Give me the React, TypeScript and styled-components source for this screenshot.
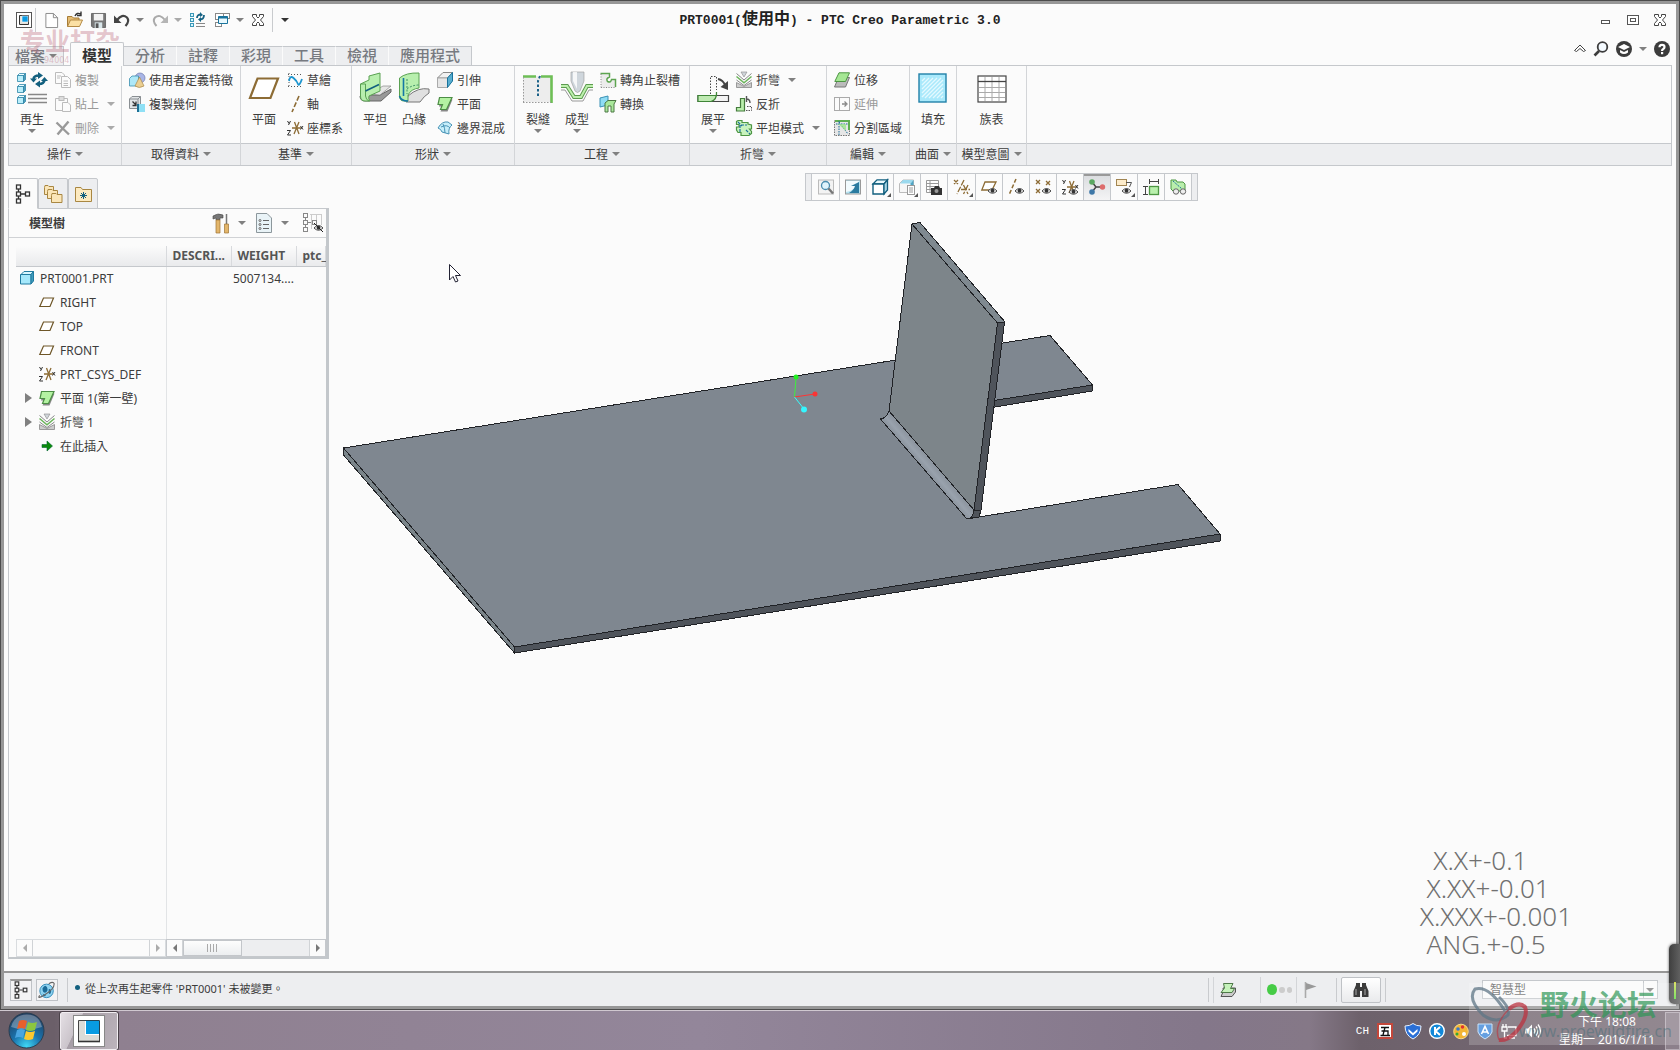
import React from 'react';
import styled, { createGlobalStyle, css } from 'styled-components';

const GlobalStyle = createGlobalStyle`
  * { box-sizing: border-box; }
  html, body { margin: 0; height: 100%; overflow: hidden; }
  body {
    font-family: "Noto Sans", "Noto Sans CJK TC", sans-serif;
    font-size: 12px;
    color: #3c3c3c;
    background: #fbfbfb;
  }
  button, select { font: inherit; color: inherit; }
  button { padding: 0; border: 0; background: none; }
  svg { display: block; flex: none; }
`;

/* ---------- icons ---------- */

const Eye = ({ x, y }: { x: number; y: number }) => (
  <g transform={`translate(${x} ${y})`}>
    <path d="M0 3Q4.500 -2 9 3Q4.500 7.500 0 3Z" fill="#fff" stroke="#444" />
    <circle cx="4.500" cy="2.800" r="2" fill="#333" />
  </g>
);

const Cube = ({ x, y }: { x: number; y: number }) => (
  <g transform={`translate(${x} ${y})`} stroke="#2f86a8" strokeWidth=".8">
    <path d="M.5 2.500L2.500 .5H8.500L6.500 2.500Z" fill="#e9fbff" />
    <path d="M.5 2.500H6.500V8.500H.5Z" fill="#b9eefb" />
    <path d="M6.500 2.500L8.500 .5V6.500L6.500 8.500Z" fill="#4e9dbb" />
  </g>
);

const Axes = () => (
  <g fill="none">
    <path d="M5 8H14M7.500 2L12 14M12 2L7 14" stroke="#8d6c35" strokeWidth="1.300" />
    <path d="M.5 1L2 3.500M3.500 1L1.500 5M0 10.500H3.500L.5 15H4M13.500 6L16 9.500M16 6L13.500 9.500" stroke="#333" />
  </g>
);

type IconDef = [number, React.ReactNode];

const ICONS: Record<string, IconDef> = {
  app: [16, <><rect x=".5" y=".5" width="15" height="15" fill="#fff" stroke="#555" /><path d="M3.500 3.500H12.500V12.500H3.500Z" fill="#e2e2dc" stroke="#333" /><rect x="6" y="4" width="6" height="6" fill="#0a9be3" stroke="#fff" strokeWidth=".6" /></>],
  newFile: [16, <path d="M2 .5H10L14.500 5V15.500H2ZM10 .5V5H14.500" fill="#fff" stroke="#888" />],
  open: [16, <><path d="M.5 14.500V4.500H5L6.500 6H12V8" fill="#e5bd74" stroke="#a67b35" /><path d="M.5 14.500L3.500 8H15.500L12.500 14.500Z" fill="#fbe0a4" stroke="#b48a45" /><path d="M8 4Q10 0 13.500 2M14 -.5V3.500H10" fill="none" stroke="#333" strokeWidth="1.400" /></>],
  save: [16, <><path d="M.5 .5H15.500V15.500H2L.5 14Z" fill="#777" stroke="#666" /><rect x="3" y="1" width="10" height="7" fill="#f2f2f2" /><rect x="4" y="10" width="8" height="6" fill="#d9e6ea" /><rect x="5" y="11" width="3" height="5" fill="#555" /></>],
  undo: [16, <><path d="M3 8Q8 1.500 13 5.500Q16 9 11.500 14" fill="none" stroke="#444" strokeWidth="2.200" /><path d="M0 3.500V11H7.500Z" fill="#444" /></>],
  redo: [16, <><path d="M13 8Q8 1.500 3 5.500Q0 9 4.500 14" fill="none" stroke="#aaa" strokeWidth="2" /><path d="M16 3.500V11H8.500Z" fill="#b5b5b5" /></>],
  regenSmall: [16, <><g fill="#d5f5fd" stroke="#3b98b8"><rect x=".5" y="1.500" width="3" height="3" /><rect x=".5" y="6.500" width="3" height="3" /><rect x=".5" y="11.500" width="3" height="3" /></g><path d="M6 11.500H15M6 14.500H15" stroke="#888" /><path d="M7 6Q7 2.500 11 2.500M14 3Q14 7.500 10 7.500" fill="none" stroke="#176384" strokeWidth="1.800" /><path d="M10 0L13 3L10 5ZM11 5L8 7.500L11 10Z" fill="#176384" /></>],
  windows: [16, <g fill="#fff" stroke="#888"><rect x="1.500" y="1.500" width="8" height="6" /><rect x="1.500" y="10.500" width="6" height="4" /><rect x="9.500" y="1.500" width="6" height="5" /><path d="M4.500 4.500H13.500V11.500H4.500Z" fill="#e8f8fd" stroke="#19739c" /><path d="M4.500 5.500H13.500" stroke="#19739c" strokeWidth="2" /></g>],
  closeOutline: [12, <path d="M.5 .5H4.500V2.500L6 4L7.500 2.500V.5H11.500V2.500L8.500 6L11.500 9.500V11.500H7.500V9.500L6 8L4.500 9.500V11.500H.5V9.500L3.500 6L.5 2.500Z" fill="#fff" stroke="#444" />],
  minimize: [12, <rect x="1.500" y="6.500" width="8" height="3" fill="#fff" stroke="#555" />],
  maximize: [12, <g fill="#fff" stroke="#555"><rect x=".5" y="1.500" width="11" height="9" /><rect x="3.500" y="4.500" width="5" height="3" /></g>],
  collapse: [12, <path d="M.5 7.500L6 2L11.500 7.500L9.500 8.500L6 5.500L2.500 8.500Z" fill="#fff" stroke="#444" />],
  search: [16, <><circle cx="9.500" cy="6" r="4.800" fill="#f4faff" stroke="#3c3c3c" strokeWidth="1.800" /><path d="M6 10L1.500 14.500" stroke="#3c3c3c" strokeWidth="2.600" /></>],
  learn: [16, <><circle cx="8" cy="8" r="8" fill="#3c3c3c" /><path d="M8 3L14 6L8 9L2 6ZM4 9V11.500Q8 14.500 12 11.500V9L8 11Z" fill="#fff" /></>],
  help: [16, <><circle cx="8" cy="8" r="8" fill="#3c3c3c" /><path d="M5.500 6.300Q5.500 3.800 8 3.800T10.500 6Q10.500 7.200 9.200 8Q8 8.700 8 10" fill="none" stroke="#fff" strokeWidth="2.200" /><rect x="7" y="11" width="2.200" height="2.200" fill="#fff" /></>],

  regenerate: [32, <><Cube x={1} y={1} /><Cube x={1} y={12} /><Cube x={1} y={23} /><path d="M12 22.500H31M12 26.500H31M12 30.500H31" stroke="#888" strokeWidth="1.500" /><path d="M17.500 7Q18 3.500 23 3.500M28.500 8Q28 12 23 12" fill="none" stroke="#13607f" strokeWidth="2.600" /><path d="M22 0L27 3.500L22 7ZM24 8.500L19 12L24 15.500ZM14 6.500H21L17.500 10.500ZM25 9H32L28.500 5Z" fill="#13607f" /></>],
  copy: [16, <g fill="#fbfbfb" stroke="#bbb"><path d="M.5 .5H7L9.500 3V11.500H.5Z" /><path d="M6.500 4.500H12.500L15.500 7.500V15.500H6.500Z" /><path d="M2 4H6M2 6H5M8.500 9H13M8.500 11.500H13M8.500 13.500H13" /></g>],
  paste: [16, <g fill="#fbfbfb" stroke="#bbb"><path d="M.5 2.500H12.500V14.500H.5Z" /><rect x="4" y=".5" width="5" height="4" fill="#ddd" /><path d="M7.500 6.500H13L15.500 9V15.500H7.500Z" /></g>],
  remove: [16, <path d="M1.500 2.500L14 14.500M13.500 1.500L2.500 14.500" stroke="#999" strokeWidth="2.400" />],
  udf: [16, <><circle cx="11" cy="6" r="5" fill="#a9b5e6" stroke="#707cae" strokeWidth=".7" /><path d="M.5 6.500L3 4H9.500V11.500L7 14H.5Z" fill="#aee8f8" stroke="#3c8fae" strokeWidth=".8" /><path d="M10.500 5L15 14Q10 17 6 14Z" fill="#ebcf92" stroke="#a98849" strokeWidth=".7" /></>],
  copyGeom: [16, <><path d="M.5 3L3 .5H11.500V10L9 12.500H.5Z" fill="#e2e5e7" stroke="#8a8f93" /><path d="M.5 3H9V12M9 3L11.500 .5" fill="none" stroke="#8a8f93" /><path d="M3.500 5.500L7 9M7 5.500V9.500H3.500" stroke="#333" strokeWidth="1.300" fill="none" /><rect x="9" y="8" width="7" height="8" fill="#8fe0f5" /><rect x="8" y="8" width="2" height="8" fill="#1f6f94" /></>],
  plane: [32, <path d="M9.500 6.500H30L22.500 26H2Z" fill="#fff" stroke="#8d6c35" strokeWidth="2.200" />],
  sketch: [16, <><path d="M1 2.500H16M1 14.500H16M2 1V16" stroke="#555" strokeDasharray="1 2" /><path d="M2 9Q3 3 6.500 6T11 12T15 7" fill="none" stroke="#1c95cf" strokeWidth="1.800" /></>],
  axis: [16, <path d="M12 0L5 16" stroke="#8d6c35" strokeWidth="1.600" strokeDasharray="5 2" />],
  csys: [16, <Axes />],
  flat: [32, <><path d="M2 23L21 23L32 17V20L22 29H6Q1 29 1 24Z" fill="#999" stroke="#666" /><path d="M10 22L24 14H32L21 23Z" fill="#e6e6e6" stroke="#777" strokeWidth=".6" /><path d="M1.500 12L10 8V4L21 1V19L10 24Q9 27 11 29H6Q1.500 29 1.500 24Z" fill="#b8efae" stroke="#5aa152" /><path d="M1.500 12H6.500V24Q7 28 10 29" fill="none" stroke="#5aa152" /><path d="M6.500 19L20 12.500" stroke="#13607f" strokeWidth="1.600" /></>],
  flange: [32, <><path d="M10 24Q20 15 31 17V21Q26 24 22 30H8Z" fill="#e0e0e0" stroke="#777" /><path d="M1.500 6Q8 .5 21 1V16Q13 17 10 23V29H6Q1.500 29 1.500 24Z" fill="#b8efae" stroke="#5aa152" /><path d="M5.500 6V24M1.500 24Q3 29 10 29" fill="none" stroke="#1477a5" strokeWidth="1.600" /><path d="M9 17Q14 13 21 13M9 7V22" fill="none" stroke="#3a8f66" strokeDasharray="2 1.500" /></>],
  extrude: [16, <><path d="M.5 6L6 .5H15.500L10.500 6Z" fill="#f1f1f1" stroke="#888" /><path d="M.5 6H10.500V15.500H.5Z" fill="#e6e6e6" stroke="#aaa" /><path d="M10.500 6L15.500 .5V9L10.500 15.500Z" fill="#58aed0" stroke="#19739c" /></>],
  planar: [16, <><path d="M3.500 3.500H15.500L10.500 15.500H3.500L6 10.500H2Z" fill="#888" /><path d="M2.500 1.500H15L9.500 13.500H3.500L5.500 8.500H1Z" fill="#b4f2a2" stroke="#4c8d45" strokeWidth="1.200" /></>],
  blend: [16, <><path d="M1 8Q5 1 11 2L15 5Q11 8 12 14L5 12Q4 9 1 8Z" fill="#c6eefa" stroke="#4692b5" /><path d="M6 4Q8 8 8 13M4 7Q10 4 13 8" fill="none" stroke="#4692b5" /></>],
  rip: [32, <><rect x="1" y="4" width="28" height="26" fill="#ededed" /><path d="M1 4.500H14M19 4.500H29.500V31" fill="none" stroke="#6ebf56" strokeWidth="2.600" /><path d="M1.500 5V31M1 30.500H29" stroke="#999" strokeDasharray="1.500 1.500" /><path d="M18 4L16 9V24" fill="none" stroke="#1b6188" strokeWidth="2" strokeDasharray="2.500 2" /></>],
  form: [32, <><path d="M10 0H23V9L19 19Q16.500 22 14 19L10 9Z" fill="#cfd6dc" stroke="#999" strokeWidth=".6" /><path d="M12 0H16V17L12 9Z" fill="#fff" opacity=".8" /><path d="M0 14H6L13 25H20L26 14H32" fill="none" stroke="#5d9a50" strokeWidth="4" /><path d="M0 14H6L13 25H20L26 14H32" fill="none" stroke="#bdf0ad" strokeWidth="2" /><path d="M0 18H4L11 29H22L28 18H32" fill="none" stroke="#999" /></>],
  relief: [16, <><path d="M1 1H10V5Q6 7 7 10Q11 12 12 7H16V16H1Z" fill="#ececec" /><path d="M.5 1.500H9.500V5Q5.500 6.500 7.500 9.500Q11 11 11.500 7.500H15.500V15" fill="none" stroke="#5da450" strokeWidth="1.500" /><path d="M1 2V16M1 15.500H15" stroke="#888" strokeDasharray="1 1.500" /></>],
  convert: [16, <><path d="M0 2L8 0V9L0 11Z" fill="#8fdcf5" stroke="#3a91b4" /><path d="M5 7L8 4.500H16L14 8V16H11V10H8V16H5Z" fill="#a9e79b" stroke="#4c7845" /></>],
  unbend: [32, <><path d="M13.500 22V4.500H19.500V18" fill="none" stroke="#444" strokeDasharray="1.500 1.500" /><path d="M1 23.500H31.500V29.500H1Z" fill="#f3f3f3" stroke="#444" strokeWidth="1.200" /><path d="M1 23.500H19.500V20Q20 28 14 29.500H1Z" fill="#bfeab2" stroke="#3f8537" strokeWidth="1.200" /><path d="M21 7Q26 8 28 13" fill="none" stroke="#444" strokeWidth="2" /><path d="M23.500 15L31 18V9Z" fill="#444" /></>],
  bend: [16, <><path d="M5 0H11L8 5Z" fill="#d0d5da" stroke="#888" strokeWidth=".6" /><path d="M.5 1.500L8 8L15.500 1.500M.5 8L8 13.500L15.500 8" fill="none" stroke="#888" /><path d="M.5 4.500L8 10.800L15.500 4.500" fill="none" stroke="#6bb45b" strokeWidth="1.500" /><path d="M.5 10.500L8 14.500L15.500 10.500V15.500H.5Z" fill="#ccc" stroke="#888" strokeWidth=".8" /></>],
  bendBack: [16, <><path d="M.5 11.500H4.500V2.500H8.500V15H.5Z" fill="#b9eeac" stroke="#457b3d" strokeWidth="1.200" /><path d="M10 14.500H15.500V10.500H10" fill="none" stroke="#555" strokeDasharray="1.500 1" /><path d="M10.500 3Q14 3 14 7M10.500 0V6" fill="none" stroke="#555" strokeWidth="1.400" /></>],
  flatPattern: [16, <><path d="M.5 1.500L2 .5H6V2.500H12V4L15.500 5V9H13.500L15.500 11.500V13.500L13 15.500H5V12.500H2L.5 10V7H3V4.500H.5Z" fill="#c8f2bd" stroke="#4d9643" strokeWidth="1.200" /><path d="M2 2L6 6M10 10L14 14M4 12V5H11" fill="none" stroke="#1d719c" strokeWidth="1.200" strokeDasharray="3 1" /></>],
  offset: [16, <><path d="M4.500 5.500H15.500L11.500 15H.5Z" fill="#bbb" stroke="#777" /><path d="M5 .8H15.500L11.500 9.500H.8Z" fill="#a5e794" stroke="#4d9643" /></>],
  extend: [16, <g fill="none" stroke="#aaa"><rect x=".5" y="1.500" width="15" height="13" /><path d="M5.500 2V14" /><path d="M8 8H12M10.500 5.500L13 8L10.500 10.500" stroke="#888" strokeWidth="1.300" /></g>],
  split: [16, <><rect x=".5" y=".5" width="15" height="15" fill="#e6e6e6" stroke="#777" strokeDasharray="1.500 1" /><path d="M1 1H15V10" fill="none" stroke="#5fae50" strokeWidth="2" /><path d="M2 4H14M5 2L14 14M5 1V15" stroke="#1c6c97" strokeDasharray="1.500 1" /><path d="M4 4H12V11Z" fill="#9ee38b" opacity=".8" /></>],
  fill: [32, <><rect x="2" y="2" width="27" height="28" fill="#a9e9fb" stroke="#2180a8" strokeWidth="1.400" /><path d="M5 9L8 6M5 13L12 6M5 17L16 6M5 21L20 6M5 25L24 6M8 26L26 8M12 26L26 12M16 26L26 16M20 26L26 20M24 26L26 24" stroke="#e4f9fe" strokeWidth="1.300" /></>],
  family: [32, <g fill="#fff"><rect x="2" y="4" width="28" height="26" stroke="#444" strokeWidth="1.200" /><path d="M3 15.500H29M3 20.500H29M3 25.500H29M9 5V29M16 5V29M23 5V29" stroke="#aaa" /><path d="M2 9.500H30" stroke="#444" strokeWidth="1.300" /></g>],

  zoomFit: [16, <><rect x=".5" y="1" width="15" height="14" fill="#f3f3f3" stroke="#bbb" /><circle cx="7.500" cy="6.500" r="4" fill="#dff4fd" stroke="#4a8cae" strokeWidth="1.300" /><path d="M10.500 9.500L15 14.500" stroke="#777" strokeWidth="2.400" /></>],
  repaint: [16, <><rect x=".5" y="1" width="15" height="14" fill="#b5e2f0" stroke="#999" /><path d="M1 2H14Q10 12 1 13Z" fill="#f2fbfe" /><path d="M4 14Q9 11 10 7H6L14 3V14Z" fill="#2a7ba0" /></>],
  shaded: [16, <><path d="M1 5L5 .8H15.500L12 5Z" fill="#e9f9fd" stroke="#13607f" strokeWidth="1.300" /><path d="M1 5H12V15H1Z" fill="#fff" stroke="#13607f" strokeWidth="1.400" /><path d="M12 5L15.500 .8V11L12 15Z" fill="#a9d6e5" stroke="#13607f" strokeWidth="1.300" /></>],
  saved: [16, <><path d="M.5 4.500L4 1H14.500V11L11 13.500H.5Z" fill="#f6f6f6" stroke="#bbb" /><path d="M4 1H14.500L11.500 4.500H1Z" fill="#9bd9ee" /><path d="M11.500 4.500L14.500 1V6H11.500Z" fill="#4fa6c6" /><rect x="8.500" y="6.500" width="7" height="9" fill="#fff" stroke="#999" /><path d="M10 9H14M10 11H14M10 13H14" stroke="#999" /></>],
  viewMgr: [16, <><path d="M.5 1.500H12.500V13.500H.5ZM.5 4.500H12.500M.5 7.500H12.500M.5 10.500H12.500M4 2V13" fill="#fff" stroke="#999" /><path d="M5 9H8L9 7H13L14 9H16V16H5Z" fill="#333" /><circle cx="10.500" cy="12" r="2" fill="#999" /></>],
  datums: [16, <path d="M0 1L4 5M4 1L0 5M10 1L3 15M7 10.500H16M9.500 6L14 15M14 6L9.500 15" stroke="#8d6c35" strokeWidth="1.300" strokeDasharray="6 1.500" />],
  planeEye: [16, <><path d="M4 3H15L11 11H.8Z" fill="#fff" stroke="#8d6c35" strokeWidth="1.300" /><Eye x={7} y={9} /></>],
  axisEye: [16, <><path d="M8 0L1 16" stroke="#8d6c35" strokeWidth="1.500" strokeDasharray="4 2" /><Eye x={7} y={9} /></>],
  pointEye: [16, <><path d="M1 1L5 5M5 1L1 5M11 2L15 6M15 2L11 6M1 10L5 14M5 10L1 14" stroke="#8d6c35" strokeWidth="1.300" /><Eye x={7} y={9} /></>],
  csysEye: [16, <><Axes /><Eye x={7} y={10} /></>],
  spin: [16, <><path d="M3 3L7 8L3 13M7 8H13" fill="none" stroke="#444" strokeWidth="1.500" /><circle cx="3" cy="3" r="2.800" fill="#5aa861" /><circle cx="3" cy="13" r="2.800" fill="#3f78a8" /><circle cx="13.500" cy="8" r="2.700" fill="#dd6c6c" /></>],
  annotEye: [16, <><rect x=".5" y=".5" width="10" height="6" fill="#fdeccb" stroke="#a18552" /><path d="M10 3.500H15.500L13.500 8" fill="none" stroke="#555" /><Eye x={6} y={9} /></>],
  dims: [16, <><rect x="6.500" y="7.500" width="9" height="8" fill="#b9f0ac" stroke="#4d9643" strokeWidth="1.300" /><path d="M6 2.500H16M6.500 0V5M15.500 0V5M2.500 7V16M0 7.500H5M0 15.500H5" stroke="#444" /></>],
  glasses: [16, <><path d="M1 1H6L7 3H13L15 5V12H3L1 10Z" fill="#b9eeac" stroke="#4d9643" /><path d="M3 2L12 10" stroke="#1d719c" strokeDasharray="2 1" /><circle cx="6" cy="12.500" r="2.700" fill="#eee" stroke="#666" /><circle cx="13" cy="12.500" r="2.700" fill="#eee" stroke="#666" /></>],

  treeTab: [20, <g fill="none" stroke="#333" strokeWidth="1.300"><rect x="3.500" y="1" width="4" height="4" /><rect x="3.500" y="8" width="4" height="4" /><rect x="3.500" y="15" width="4" height="4" /><rect x="12.500" y="8" width="4" height="4" /><path d="M5.500 5V8M5.500 12V15M8 10H12" /></g>],
  folders: [20, <g fill="#fbe6b8" stroke="#a98742"><path d="M1.500 3.500V10.500H10.500V2.500H6L5 1.500H2Z" /><path d="M4.500 7.500V14.500H14.500V6.500H10L9 5.500H5Z" /><path d="M8.500 11.500V18.500H19V10.500H14L13 9.500H9Z" /></g>],
  favorite: [20, <><path d="M2.500 3.500H8L9.500 5.500H18.500V17.500H2.500Z" fill="#fdeac0" stroke="#a98742" /><path d="M10.500 8V15M7 11.500H14M8 9L13 14M13 9L8 14" stroke="#13607f" /></>],
  tools: [20, <><path d="M2 3Q7 -.5 12 2V5H9V7H5V5L2 6Z" fill="#777" stroke="#444" strokeWidth=".6" /><path d="M5 7H9V20H5Z" fill="#e3b66b" stroke="#9d7334" strokeWidth=".7" /><path d="M15.500 1V12" stroke="#777" strokeWidth="1.500" /><path d="M13.500 11H17.500V20H13.500Z" fill="#e3b66b" stroke="#9d7334" strokeWidth=".7" /></>],
  listDoc: [20, <><path d="M2.500 .5H13L17.500 5V19.500H2.500Z" fill="#e9f3f7" stroke="#8c979c" /><path d="M9 7.500H15M9 11.500H15M9 15.500H15" stroke="#666" /><g fill="#fff" stroke="#666"><circle cx="6" cy="7.500" r="1" /><circle cx="6" cy="11.500" r="1" /><circle cx="6" cy="15.500" r="1" /></g></>],
  treeHide: [20, <><g fill="none" stroke="#888"><rect x=".5" y=".5" width="4" height="4" /><rect x=".5" y="7.500" width="4" height="4" /><rect x=".5" y="14.500" width="4" height="4" /><rect x="9.500" y="7.500" width="4" height="4" /><path d="M2.500 5V7M2.500 12V14M5 9.500H9" /><path d="M7 1.500H19M8.500 2V16M13.500 2V7M18.500 2V12" stroke="#ccc" /></g><Eye x={11} y={12} /><path d="M11 10L20 19" stroke="#222" /></>],
  part: [16, <><path d="M2 4.500L5 1.500H14.500L12 4.500Z" fill="#d8f7ff" stroke="#217ba0" /><path d="M1.500 4.500H12V14H1.500Z" fill="#a5e8fb" stroke="#217ba0" /><path d="M12 4.500L14.500 1.500V11L12 14Z" fill="#3e9cbd" stroke="#217ba0" /></>],
  planeSmall: [16, <path d="M4.500 4H14.500L11 12.500H.8Z" fill="#fff" stroke="#6e5628" strokeWidth="1.200" />],
  insert: [16, <path d="M3 6.500H8V3L13.500 8L8 13V9.500H3Z" fill="#0a8a0a" stroke="#063" strokeWidth=".6" />],
  globe: [20, <><circle cx="9.500" cy="11" r="7.500" fill="#8fd3f0" stroke="#2a86b5" /><path d="M5 8Q8 3 10 7T8 13Q5 13 5 8ZM12 9Q16 9 14 14Q11 16 12 9ZM5 14L9 16L7 17Z" fill="#1b6b98" /><path d="M2 16Q-2 21 8 15T18 3Q17 0 12 3" fill="none" stroke="#666" strokeWidth="1.200" /></>],
  layers: [16, <><path d="M3 6H15.500V10L12 14.500H1L3.500 9Z" fill="#ccc" stroke="#555" /><path d="M3.500 1.500H13L10.500 6.500H14.500L12 10.500H1L4.500 6Z" fill="#c5f2ba" stroke="#4f7a49" /></>],
  flag: [16, <><path d="M2.500 0V16" stroke="#aaa" strokeWidth="1.600" /><path d="M3 1L13.500 4.500L3 8Z" fill="#999" /></>],
  binoculars: [16, <><path d="M3 3V1H7V15H.5V9ZM13 3V1H9V15H15.500V9Z" fill="#3b3b3b" /><rect x="6" y="5" width="4" height="4" fill="#3b3b3b" /><path d="M3 7V13M12 7V13" stroke="#aaa" /></>],
  appLarge: [32, <><rect x=".5" y=".5" width="31" height="31" fill="#fff" stroke="#888" /><path d="M5.500 5.500H26.500V26.500H5.500Z" fill="#dcdcd8" stroke="#444" /><path d="M5 26.500H27" stroke="#333" strokeWidth="1.600" /><rect x="12.500" y="5.500" width="14" height="14" fill="#089be2" stroke="#fff" /><path d="M12 5.500H26.500V20" fill="none" stroke="#245" /></>],
  ime: [16, <><rect x="1" y="1" width="14" height="14" fill="#fff" stroke="#c3473b" strokeWidth="2" /><path d="M4 4.500H12M4.500 8H11V12M8 4.500L6 12M3.500 12.500H13" stroke="#111" strokeWidth="1.300" fill="none" /></>],
  shield: [16, <><path d="M0 3Q5 3 8 .5Q11 3 16 3Q16 12 8 16Q0 12 0 3Z" fill="#2a6fd6" stroke="#e9f2ff" /><path d="M3.500 6L8 10L12.500 6V8.500L8 12.500L3.500 8.500Z" fill="#fff" /></>],
  kcircle: [16, <><circle cx="8" cy="8" r="7.300" fill="#1187d8" stroke="#fff" strokeWidth="1.400" /><path d="M6 4V12M11 4L6.500 8L11 12" fill="none" stroke="#fff" strokeWidth="2" /></>],
  palette: [16, <><circle cx="8" cy="8.500" r="7.300" fill="#f3b534" stroke="#f8d98b" /><circle cx="11" cy="11" r="2" fill="#fff" /><circle cx="5" cy="6" r="1.800" fill="#3b77c7" /><circle cx="9.500" cy="4" r="1.700" fill="#d33" /><circle cx="4" cy="11" r="1.500" fill="#3a3" /></>],
  adShield: [16, <><path d="M1 1H15V9Q14 13 8 16Q2 13 1 9Z" fill="#3f87d9" stroke="#bfdcf8" /><path d="M4.500 11L8 3.500L11.500 11M6 9H10" fill="none" stroke="#fff" strokeWidth="1.600" /></>],
  network: [16, <g fill="none" stroke="#fff" strokeWidth="1.300"><path d="M7 4H15V12.500H6M8 15H14M2 1V4M5 1V4M1 4H6V8H1ZM3.500 8V15H6" /></g>],
  speaker: [16, <><path d="M0 5.500H3L7 1.500V14.500L3 10.500H0Z" fill="#fff" /><path d="M9 5.500Q11 8 9 10.500M11 3.500Q14.500 8 11 12.500M13 1.500Q18 8 13 14.500" fill="none" stroke="#fff" strokeWidth="1.300" /></>],
};

const Icon = ({ name, size = 16 }: { name: string; size?: number }) => {
  const [box, drawing] = ICONS[name];
  return (
    <svg width={size} height={size} viewBox={`0 0 ${box} ${box}`} aria-hidden="true" overflow="visible">
      {drawing}
    </svg>
  );
};

const Caret = styled.span<{ $dark?: boolean; $faint?: boolean }>`
  display: inline-block;
  flex: none;
  border: 4px solid transparent;
  border-top-color: ${(p) => (p.$dark ? '#333' : p.$faint ? '#aaa' : '#808080')};
  border-bottom-width: 0;
`;

/* ---------- frame ---------- */

const Desktop = styled.div`
  position: relative;
  height: 100vh;
  display: flex;
  flex-direction: column;
`;

const AppWindow = styled.div`
  flex: 1;
  min-height: 0;
  display: flex;
  flex-direction: column;
  border: 3px solid #979797;
  outline: 1px solid #4c4c4c;
  margin: 1px;
  background: #fbfbfb;
`;

const TitleBar = styled.header`
  height: 38px;
  padding: 0 10px 6px;
  display: grid;
  grid-template-columns: 1fr auto 1fr;
  align-items: center;
`;

const QuickAccess = styled.div`
  display: flex;
  align-items: center;
  gap: 8px;
  padding-left: 2px;
`;

const IconButton = styled.button<{ $gap?: number }>`
  display: flex;
  align-items: center;
  gap: ${(p) => p.$gap ?? 0}px;
`;

const Divider = styled.span<{ $pull?: number }>`
  flex: none;
  width: 1px;
  height: 24px;
  margin-left: ${(p) => p.$pull ?? 0}px;
  background: #c9cbce;
`;

const Title = styled.h1`
  margin: 0;
  font: bold 13px/20px "Liberation Mono", "Noto Sans CJK TC", monospace;
  color: #222;
  span { font-size: 16px; }
`;

const WindowControls = styled.div`
  display: flex;
  justify-content: flex-end;
  gap: 15px;
`;

const TabRow = styled.nav`
  display: flex;
  align-items: flex-end;
  height: 23px;
  padding: 0 6px 0 4px;
`;

const RibbonTab = styled.button<{ $kind?: 'file' | 'active'; $last?: boolean }>`
  height: 19px;
  min-width: 53px;
  padding: 0 11px 1px;
  display: flex;
  align-items: center;
  justify-content: center;
  gap: 4px;
  font-size: 15px;
  line-height: 17px;
  font-weight: 500;
  color: #777a80;
  background: #edeef0;
  border-top: 1px solid #c5c8cc;
  border-right: 1px solid ${(p) => (p.$last ? '#c5c8cc' : '#fbfbfb')};
  ${(p) => p.$kind === 'file' && css`
    border: 1px solid #c5c8cc;
    border-bottom: 0;
    padding: 0 6px;
    margin-right: 6px;
    min-width: 55px;
  `}
  ${(p) => p.$kind === 'active' && css`
    height: 24px;
    margin-bottom: -1px;
    padding-top: 2px;
    color: #333;
    font-weight: 700;
    background: #fbfbfb;
    border: 1px solid #c5c8cc;
    border-bottom: 0;
    border-radius: 2px 2px 0 0;
    z-index: 1;
  `}
`;

const HelpTools = styled.div`
  margin-left: auto;
  align-self: flex-start;
  height: 14px;
  display: flex;
  align-items: center;
  gap: 7px;
`;

/* ---------- ribbon ---------- */

const Ribbon = styled.section`
  margin: 0 4px;
  display: flex;
  flex: none;
  height: 101px;
  border: 1px solid #c5c8cc;
  background: linear-gradient(#fbfbfb 77px, #c5c8cc 77px, #c5c8cc 78px, #edeef0 78px);
`;

const Group = styled.div<{ $w: number }>`
  width: ${(p) => p.$w}px;
  flex: none;
  display: flex;
  flex-direction: column;
  border-right: 1px solid #d3d5d8;
`;

const GroupBody = styled.div<{ $center?: boolean }>`
  height: 78px;
  padding: 2px 7px 0;
  display: flex;
  gap: 7px;
  justify-content: ${(p) => (p.$center ? 'center' : 'flex-start')};
`;

const GroupName = styled.button`
  flex: 1;
  display: flex;
  align-items: center;
  justify-content: center;
  gap: 4px;
  padding-bottom: 2px;
`;

const BigButton = styled.button`
  width: 32px;
  display: flex;
  flex-direction: column;
  align-items: center;
  line-height: 18px;
  white-space: nowrap;
  padding-top: 4px;
  svg { margin-bottom: 7px; }
`;

const SmallColumn = styled.div`
  display: flex;
  flex-direction: column;
`;

const SmallButton = styled.button<{ $off?: boolean }>`
  height: 24px;
  display: flex;
  align-items: center;
  gap: 4px;
  white-space: nowrap;
  color: ${(p) => (p.$off ? '#999' : 'inherit')};
  ${Caret} { margin-left: 4px; }
`;

type Small = { icon: string; text: string; menu?: boolean; off?: boolean };
type GroupData = { name: string; w: number; center?: boolean; big: { icon: string; text: string; menu?: boolean }[]; small: Small[] };

const GROUPS: GroupData[] = [
  { name: '操作', w: 113, big: [{ icon: 'regenerate', text: '再生', menu: true }], small: [
    { icon: 'copy', text: '複製', off: true }, { icon: 'paste', text: '貼上', off: true, menu: true }, { icon: 'remove', text: '刪除', off: true, menu: true }] },
  { name: '取得資料', w: 119, big: [], small: [{ icon: 'udf', text: '使用者定義特徵' }, { icon: 'copyGeom', text: '複製幾何' }] },
  { name: '基準', w: 111, big: [{ icon: 'plane', text: '平面' }], small: [
    { icon: 'sketch', text: '草繪' }, { icon: 'axis', text: '軸' }, { icon: 'csys', text: '座標系' }] },
  { name: '形狀', w: 163, big: [{ icon: 'flat', text: '平坦' }, { icon: 'flange', text: '凸緣' }], small: [
    { icon: 'extrude', text: '引伸' }, { icon: 'planar', text: '平面' }, { icon: 'blend', text: '邊界混成' }] },
  { name: '工程', w: 175, big: [{ icon: 'rip', text: '裂縫', menu: true }, { icon: 'form', text: '成型', menu: true }], small: [
    { icon: 'relief', text: '轉角止裂槽' }, { icon: 'convert', text: '轉換' }] },
  { name: '折彎', w: 137, big: [{ icon: 'unbend', text: '展平', menu: true }], small: [
    { icon: 'bend', text: '折彎', menu: true }, { icon: 'bendBack', text: '反折' }, { icon: 'flatPattern', text: '平坦模式', menu: true }] },
  { name: '編輯', w: 83, big: [], small: [
    { icon: 'offset', text: '位移' }, { icon: 'extend', text: '延伸', off: true }, { icon: 'split', text: '分割區域' }] },
  { name: '曲面', w: 47, center: true, big: [{ icon: 'fill', text: '填充' }], small: [] },
  { name: '模型意圖', w: 70, center: true, big: [{ icon: 'family', text: '族表' }], small: [] },
];

/* ---------- work area ---------- */

const WorkArea = styled.div`
  flex: 1;
  min-height: 0;
  display: flex;
`;

const SidePanel = styled.aside`
  width: 325px;
  flex: none;
  padding: 12px 0 12px 4px;
  display: flex;
  flex-direction: column;
`;

const PanelTabs = styled.div`
  display: flex;
  height: 31px;
  z-index: 1;
  margin-bottom: -1px;
`;

const PanelTab = styled.button<{ $active?: boolean }>`
  width: 30px;
  display: grid;
  place-items: center;
  border: 1px solid #c5c8cc;
  border-bottom-color: ${(p) => (p.$active ? '#fbfbfb' : '#c5c8cc')};
  background: ${(p) => (p.$active ? '#fbfbfb' : '#edeef0')};
  border-radius: 2px 2px 0 0;
`;

const PanelBox = styled.div`
  flex: 1;
  min-height: 0;
  display: flex;
  flex-direction: column;
  border: 1px solid #c5c8cc;
  border-right: 3px solid #c3c7cb;
  border-bottom: 2px solid #c3c7cb;
`;

const PanelHeader = styled.div`
  height: 29px;
  flex: none;
  display: flex;
  align-items: center;
  padding: 0 3px 0 20px;
  border-bottom: 1px solid #d0d2d5;
  h2 { margin: 0; font-size: 12px; font-weight: 700; flex: 1; }
  button + button { margin-left: 8px; }
  button:last-child { margin-left: 14px; }
`;

const TreeArea = styled.div`
  flex: 1;
  min-height: 0;
  margin: 8px 0 0 7px;
  overflow: hidden;
  background: linear-gradient(#e2e4e6, #e2e4e6) 150px 0 / 1px 100% no-repeat;
`;

const TreeTable = styled.table`
  width: 309px;
  table-layout: fixed;
  border-collapse: collapse;
  th {
    height: 20px;
    padding: 0 0 0 6px;
    text-align: left;
    font-weight: 700;
    line-height: 19px;
    color: #555;
    background: linear-gradient(#fbfbfb, #e9eaec);
    border-bottom: 1px solid #c5c8cc;
    border-right: 1px solid #d8dadd;
  }
  td { height: 24px; padding: 0 0 0 2px; white-space: nowrap; }
`;

const TreeNode = styled.div<{ $root?: boolean }>`
  display: flex;
  align-items: center;
  gap: 5px;
  padding-left: ${(p) => (p.$root ? 1 : 7)}px;
`;

const Expander = styled.span<{ $on?: boolean }>`
  width: 9px;
  height: 10px;
  border: 5px solid transparent;
  border-left: 7px solid ${(p) => (p.$on ? '#808080' : 'transparent')};
  border-right-width: 0;
`;

const ScrollRow = styled.div`
  display: flex;
  height: 18px;
  margin-left: 7px;
`;

const ScrollBar = styled.div<{ $w?: number; $off?: boolean }>`
  ${(p) => (p.$w ? `width: ${p.$w}px;` : 'flex: 1;')}
  display: flex;
  border: 1px solid ${(p) => (p.$off ? '#d9dcdf' : '#c5c8cc')};
  background: ${(p) => (p.$off ? '#fbfbfb' : '#edeef0')};
  color: ${(p) => (p.$off ? '#aaa' : '#777')};
`;

const ScrollArrow = styled.button<{ $right?: boolean }>`
  width: 16px;
  display: grid;
  place-items: center;
  background: #fbfbfb;
  border: 0 solid #d0d3d6;
  border-width: ${(p) => (p.$right ? '0 0 0 1px' : '0 1px 0 0')};
  &::before {
    content: '';
    border: 4px solid transparent;
    ${(p) => (p.$right ? 'border-left-color: currentColor; border-right-width: 0;' : 'border-right-color: currentColor; border-left-width: 0;')}
  }
`;

const ScrollTrack = styled.div`
  flex: 1;
  display: flex;
`;

const ScrollThumb = styled.div`
  width: 59px;
  border: 1px solid #c3c6ca;
  background:
    repeating-linear-gradient(90deg, #aaa 0 1px, transparent 1px 3px) center / 12px 8px no-repeat,
    linear-gradient(#fdfdfd, #eceef0);
`;

const Viewport = styled.main`
  position: relative;
  flex: 1;
  min-width: 0;
  display: flex;
  flex-direction: column;
  justify-content: space-between;
  align-items: center;
  padding: 7px 0 13px;
`;

const Scene = styled.svg`
  position: absolute;
  inset: 0;
  width: 100%;
  height: 100%;
`;

const ViewToolbar = styled.div`
  position: relative;
  display: flex;
  height: 28px;
  margin-right: 2px;
  padding: 0 5px;
  border: 1px solid #c5c8cc;
  background: #edeef0;
`;

const ViewButton = styled.button<{ $on?: boolean }>`
  position: relative;
  width: 27px;
  display: grid;
  place-items: center;
  border-left: 1px solid #c5c8cc;
  background: ${(p) => (p.$on ? 'linear-gradient(#d9dbde, #f4f4f5)' : '#fbfbfb')};
  box-shadow: ${(p) => (p.$on ? 'inset 0 2px 0 #999' : 'none')};
  &:first-child, &:nth-child(6) { width: 28px; }
  &:last-child { width: 28px; border-right: 1px solid #c5c8cc; }
`;

const Corner = styled.span`
  position: absolute;
  right: 2px;
  bottom: 3px;
  border: 2px solid #555;
  border-top-color: transparent;
  border-left-color: transparent;
`;

const Tolerances = styled.pre`
  position: relative;
  align-self: flex-end;
  margin: 0 104px 0 0;
  font: 300 26px/28px "Noto Sans", "Open Sans", sans-serif;
  color: #707070;
`;

const VIEW_TOOLS: { icon: string; corner?: boolean; on?: boolean; label: string }[] = [
  { icon: 'zoomFit', label: 'Refit' }, { icon: 'repaint', label: 'Repaint' }, { icon: 'shaded', corner: true, label: 'Display style' },
  { icon: 'saved', corner: true, label: 'Saved views' }, { icon: 'viewMgr', label: 'View manager' }, { icon: 'datums', corner: true, label: 'Datum display' },
  { icon: 'planeEye', label: 'Planes' }, { icon: 'axisEye', label: 'Axes' }, { icon: 'pointEye', label: 'Points' }, { icon: 'csysEye', label: 'Csys' },
  { icon: 'spin', on: true, label: 'Spin center' }, { icon: 'annotEye', corner: true, label: 'Annotations' }, { icon: 'dims', label: 'Dimensions' }, { icon: 'glasses', label: 'Preview' },
];

const TREE: { icon: string; text: string; root?: boolean; open?: boolean; weight?: string }[] = [
  { icon: 'part', text: 'PRT0001.PRT', root: true, weight: '5007134....' },
  { icon: 'planeSmall', text: 'RIGHT' },
  { icon: 'planeSmall', text: 'TOP' },
  { icon: 'planeSmall', text: 'FRONT' },
  { icon: 'csys', text: 'PRT_CSYS_DEF' },
  { icon: 'planar', text: '平面 1(第一壁)', open: true },
  { icon: 'bend', text: '折彎 1', open: true },
  { icon: 'insert', text: '在此插入' },
];

const Model = () => (
  <Scene aria-hidden="true">
    <defs>
      <linearGradient id="bendShade" gradientUnits="userSpaceOnUse" x1="920" y1="471" x2="934" y2="459">
        <stop offset="0" stopColor="#7f8790" />
        <stop offset=".5" stopColor="#99a2ad" />
        <stop offset="1" stopColor="#858d96" />
      </linearGradient>
    </defs>
    <g transform="translate(-329 -166)" stroke="#202226" strokeLinejoin="round" shapeRendering="crispEdges">
      <path d="M343.500 448L514.500 647V653L343.500 455Z" fill="#7b858a" />
      <path d="M514.500 647L1220 534V541L514.500 653Z" fill="#4f545b" />
      <path d="M940 409L1092.500 385V391L940 416Z" fill="#4f545b" />
      <path d="M343.500 448L1050 335.500L1092.500 385L940 409L967 519L1178 484.500L1220 534L514.500 647Z" fill="#7f8790" />
      <path d="M912 224L920 222.500L1005 322L997.500 323Z" fill="#7f8990" />
      <path d="M997.500 322.500H1004.500L981 510L979 517H971L974 510Z" fill="#4f545b" />
      <path d="M912 224L997.500 323L974 510L889 411Z" fill="#7d858a" />
      <path d="M889 411Q887 418 880.500 419L967 519Q973 518 974 510Z" fill="url(#bendShade)" />
      <path d="M974 510H981" />
    </g>
    <g transform="translate(-329 -166)" fill="none">
      <path d="M794.500 397L796 378" stroke="#3df03d" />
      <path d="M794.500 397L815 394" stroke="#f33" />
      <path d="M794.500 397L804 409" stroke="#3ff" />
      <circle cx="796" cy="377" r="2.500" fill="#22f022" />
      <circle cx="815" cy="394" r="2.500" fill="#fa3535" />
      <circle cx="804" cy="409.500" r="3" fill="#35f6ff" />
      <path d="M449.500 264.500V280L453 276.500L455.500 282L458 281L455.500 275.500H460.500Z" fill="#fff" stroke="#223" />
    </g>
  </Scene>
);

/* ---------- status bar ---------- */

const StatusBar = styled.footer`
  height: 35px;
  flex: none;
  display: flex;
  align-items: center;
  gap: 4px;
  padding: 0 18px 0 6px;
  border-top: 2px solid #979797;
  background: #edeef0;
`;

const StatusButton = styled.button<{ $on?: boolean }>`
  width: 22px;
  height: 22px;
  display: grid;
  place-items: center;
  border: 1px solid #bfc2c6;
  border-top: ${(p) => (p.$on ? '2px solid #999' : '1px solid #bfc2c6')};
  background: #f3f3f4;
`;

const Message = styled.p`
  flex: 1;
  margin: 0 0 0 3px;
  padding-bottom: 4px;
  display: flex;
  align-items: center;
  gap: 5px;
  font-size: 11px;
  &::before {
    content: '';
    width: 5px;
    height: 5px;
    border-radius: 50%;
    background: #13607f;
  }
`;

const StatusCell = styled.div<{ $w: number }>`
  width: ${(p) => p.$w}px;
  height: 26px;
  padding-left: 6px;
  display: flex;
  align-items: center;
  gap: 2px;
  border-left: 1px solid #d3d5d8;
`;

const Dot = styled.span<{ $big?: boolean }>`
  width: ${(p) => (p.$big ? 11 : 6)}px;
  height: ${(p) => (p.$big ? 11 : 6)}px;
  border-radius: 50%;
  background: ${(p) => (p.$big ? '#46cc46' : '#ccc')};
`;

const FindButton = styled.button`
  width: 40px;
  height: 26px;
  display: grid;
  place-items: center;
  border: 1px solid #bfc2c6;
  border-radius: 2px;
  background: linear-gradient(#fff, #e9eaec);
`;

const FilterSelect = styled.div`
  position: relative;
  margin-left: 92px;
  select {
    width: 176px;
    height: 19px;
    padding: 0 7px;
    appearance: none;
    border: 1px solid #c5c8cc;
    border-radius: 0;
    background: linear-gradient(#c5c8cc, #c5c8cc) 160px 0 / 1px 100% no-repeat #fbfbfb;
    color: #666;
    line-height: 16px;
  }
  ${Caret} { position: absolute; right: 4px; top: 8px; }
`;

/* ---------- taskbar ---------- */

const Taskbar = styled.div`
  height: 40px;
  flex: none;
  display: flex;
  align-items: center;
  padding-left: 8px;
  border-top: 1px solid #d0c8d0;
  background: linear-gradient(90deg, #6b5f69 0, #6b5f69 54px, #8f8090 120px, #93869a 700px, #84778a 1200px, #857887 1310px, #6d616b 1360px, #776a75 1680px);
`;

const StartButton = styled.button`
  width: 37px;
  height: 37px;
`;

const TaskButton = styled.button`
  width: 58px;
  height: 38px;
  margin: 0 auto 0 15px;
  display: grid;
  place-items: center;
  border: 1px solid #f1edf1;
  border-radius: 2px;
  outline: 1px solid #4b424a;
  background: linear-gradient(115deg, #e4dfe4 0, #cbc4cb 30%, #a79ea7 31%, #bcb4bc 100%);
`;

const Tray = styled.div`
  display: flex;
  align-items: center;
  gap: 8px;
  color: #fff;
`;

const InputMethod = styled.div`
  display: flex;
  align-items: center;
  gap: 8px;
  margin-right: 4px;
  font: 11px/16px "Liberation Mono", monospace;
`;

const Clock = styled.time`
  width: 108px;
  padding-left: 8px;
  text-align: center;
  white-space: nowrap;
  font-size: 12px;
  line-height: 18px;
`;

const ShowDesktop = styled.button`
  width: 15px;
  height: 38px;
  border: 1px solid #b5abb4;
  background: #8c808b;
`;

/* ---------- overlays ---------- */

const TopMark = styled.div`
  position: absolute;
  left: 20px;
  top: 26px;
  pointer-events: none;
  color: rgba(190, 110, 130, 0.4);
  font: 700 25px/28px "Noto Sans CJK SC", sans-serif;
  small { display: block; margin-left: 24px; font: 8px/14px "DejaVu Sans", sans-serif; }
`;

const SiteMark = styled.div`
  position: absolute;
  right: 0;
  bottom: 5px;
  width: 211px;
  height: 62px;
  display: flex;
  flex-direction: column;
  align-items: flex-end;
  padding: 2px 8px 0 0;
  background: rgba(255, 255, 255, 0.2);
  pointer-events: none;
  svg { position: absolute; left: 0; top: 0; }
  strong { padding-right: 16px; font: 700 29px/36px "Noto Sans CJK SC", sans-serif; color: rgba(45, 150, 85, 0.7); }
  span { font: 16px/20px "Noto Sans", sans-serif; color: rgba(70, 110, 120, 0.5); }
`;

const SideWidget = styled.div`
  position: absolute;
  right: 0;
  bottom: 46px;
  width: 11px;
  height: 60px;
  border-radius: 5px 0 0 5px;
  background: linear-gradient(90deg, #3f3f3f, #606060);
  box-shadow: 0 0 3px #555;
  &::after {
    content: '';
    position: absolute;
    right: 4px;
    bottom: 5px;
    width: 2px;
    height: 17px;
    background: linear-gradient(#d7d94c, #5bdc3c);
  }
`;

const TABS = ['分析', '註釋', '彩現', '工具', '檢視', '應用程式'];

export default function App() {
  return (
    <Desktop>
      <GlobalStyle />
      <AppWindow>
        <TitleBar>
          <QuickAccess>
            <IconButton aria-label="Application"><Icon name="app" /></IconButton>
            <Divider $pull={-5} />
            <IconButton aria-label="New"><Icon name="newFile" size={15} /></IconButton>
            <IconButton aria-label="Open"><Icon name="open" /></IconButton>
            <IconButton aria-label="Save"><Icon name="save" size={15} /></IconButton>
            <IconButton aria-label="Undo" $gap={6}><Icon name="undo" /><Caret /></IconButton>
            <IconButton aria-label="Redo" $gap={6}><Icon name="redo" /><Caret $faint /></IconButton>
            <IconButton aria-label="Regenerate"><Icon name="regenSmall" /></IconButton>
            <IconButton aria-label="Windows" $gap={6}><Icon name="windows" /><Caret /></IconButton>
            <IconButton aria-label="Close window"><Icon name="closeOutline" size={12} /></IconButton>
            <Divider />
            <IconButton aria-label="Customize"><Caret $dark /></IconButton>
          </QuickAccess>
          <Title>PRT0001(<span>使用中</span>) - PTC Creo Parametric 3.0</Title>
          <WindowControls>
            <IconButton aria-label="Minimize"><Icon name="minimize" size={12} /></IconButton>
            <IconButton aria-label="Maximize"><Icon name="maximize" size={12} /></IconButton>
            <IconButton aria-label="Close"><Icon name="closeOutline" size={12} /></IconButton>
          </WindowControls>
        </TitleBar>

        <TabRow>
          <RibbonTab $kind="file">檔案<Caret /></RibbonTab>
          <RibbonTab $kind="active">模型</RibbonTab>
          {TABS.map((t, i) => <RibbonTab key={t} $last={i === TABS.length - 1}>{t}</RibbonTab>)}
          <HelpTools>
            <IconButton aria-label="Collapse ribbon"><Icon name="collapse" size={12} /></IconButton>
            <IconButton aria-label="Search"><Icon name="search" /></IconButton>
            <IconButton aria-label="Learning" $gap={7}><Icon name="learn" /><Caret /></IconButton>
            <IconButton aria-label="Help"><Icon name="help" /></IconButton>
          </HelpTools>
        </TabRow>

        <Ribbon>
          {GROUPS.map((g) => (
            <Group key={g.name} $w={g.w}>
              <GroupBody $center={g.center}>
                {g.big.map((b) => (
                  <BigButton key={b.text}><Icon name={b.icon} size={32} />{b.text}{b.menu && <Caret />}</BigButton>
                ))}
                {g.small.length > 0 && (
                  <SmallColumn>
                    {g.small.map((s) => (
                      <SmallButton key={s.text} $off={s.off}><Icon name={s.icon} />{s.text}{s.menu && <Caret $faint={s.off} />}</SmallButton>
                    ))}
                  </SmallColumn>
                )}
              </GroupBody>
              <GroupName>{g.name}<Caret /></GroupName>
            </Group>
          ))}
        </Ribbon>

        <WorkArea>
          <SidePanel>
            <PanelTabs>
              <PanelTab $active aria-label="Model tree"><Icon name="treeTab" size={20} /></PanelTab>
              <PanelTab aria-label="Folders"><Icon name="folders" size={20} /></PanelTab>
              <PanelTab aria-label="Favorites"><Icon name="favorite" size={20} /></PanelTab>
            </PanelTabs>
            <PanelBox>
              <PanelHeader>
                <h2>模型樹</h2>
                <IconButton aria-label="Settings" $gap={7}><Icon name="tools" size={20} /><Caret /></IconButton>
                <IconButton aria-label="Show" $gap={7}><Icon name="listDoc" size={20} /><Caret /></IconButton>
                <IconButton aria-label="Hide columns"><Icon name="treeHide" size={20} /></IconButton>
              </PanelHeader>
              <TreeArea>
                <TreeTable>
                  <colgroup><col width="150" /><col width="65" /><col width="65" /><col width="29" /></colgroup>
                  <thead><tr><th aria-label="Name" /><th>DESCRI...</th><th>WEIGHT</th><th>ptc_</th></tr></thead>
                  <tbody>
                    {TREE.map((n) => (
                      <tr key={n.text}>
                        <td><TreeNode $root={n.root}>{!n.root && <Expander $on={n.open} />}<Icon name={n.icon} />{n.text}</TreeNode></td>
                        <td />
                        <td>{n.weight}</td>
                        <td />
                      </tr>
                    ))}
                  </tbody>
                </TreeTable>
              </TreeArea>
              <ScrollRow>
                <ScrollBar $w={150} $off><ScrollArrow aria-label="Left" /><ScrollTrack /><ScrollArrow $right aria-label="Right" /></ScrollBar>
                <ScrollBar><ScrollArrow aria-label="Left" /><ScrollTrack><ScrollThumb /></ScrollTrack><ScrollArrow $right aria-label="Right" /></ScrollBar>
              </ScrollRow>
            </PanelBox>
          </SidePanel>

          <Viewport>
            <Model />
            <ViewToolbar>
              {VIEW_TOOLS.map((t) => (
                <ViewButton key={t.icon} $on={t.on} aria-label={t.label}><Icon name={t.icon} />{t.corner && <Corner />}</ViewButton>
              ))}
            </ViewToolbar>
            <Tolerances>{'  X.X+-0.1\n X.XX+-0.01\nX.XXX+-0.001\n ANG.+-0.5'}</Tolerances>
          </Viewport>
        </WorkArea>

        <StatusBar>
          <StatusButton $on aria-label="Model tree"><Icon name="treeTab" size={18} /></StatusButton>
          <StatusButton aria-label="Browser"><Icon name="globe" size={18} /></StatusButton>
          <Divider $pull={5} />
          <Message>從上次再生起零件 'PRT0001' 未被變更。</Message>
          <Divider />
          <StatusCell $w={43}><Icon name="layers" /></StatusCell>
          <StatusCell $w={32}><Dot $big /><Dot /><Dot /></StatusCell>
          <StatusCell $w={36}><Icon name="flag" /></StatusCell>
          <Divider />
          <FindButton aria-label="Find"><Icon name="binoculars" /></FindButton>
          <Divider />
          <FilterSelect>
            <select aria-label="Filter"><option>智慧型</option></select>
            <Caret />
          </FilterSelect>
        </StatusBar>
      </AppWindow>

      <Taskbar>
        <StartButton aria-label="Start">
          <svg width="37" height="37" viewBox="0 0 37 37">
            <defs>
              <radialGradient id="orb" cx=".5" cy=".95" r=".9">
                <stop offset="0" stopColor="#3fd8f5" /><stop offset=".45" stopColor="#1a74ae" /><stop offset="1" stopColor="#203f63" />
              </radialGradient>
            </defs>
            <circle cx="18.500" cy="18.500" r="17.500" fill="url(#orb)" stroke="#2b3e50" />
            <path d="M3 15Q6 3 18.500 2.500T34 15Q18 20 3 15Z" fill="#fff" opacity=".3" />
            <path d="M11 9Q15 7 19 9L17 17Q13 15 9 17Z" fill="#e8602c" />
            <path d="M20 10Q24 12 29 10L27 18Q22 20 18 18Z" fill="#8cc63f" />
            <path d="M9 18Q13 16 17 18L15 26Q11 24 7 26Z" fill="#4aa5e0" />
            <path d="M18 19Q22 21 27 19L25 27Q20 29 16 27Z" fill="#fcc82f" />
          </svg>
        </StartButton>
        <TaskButton aria-label="Creo Parametric"><Icon name="appLarge" size={32} /></TaskButton>
        <Tray>
          <InputMethod>CH<Icon name="ime" /></InputMethod>
          <Icon name="shield" /><Icon name="kcircle" /><Icon name="palette" /><Icon name="adShield" /><Icon name="network" /><Icon name="speaker" />
          <Clock>下午 18:08<br />星期一 2016/1/11</Clock>
          <ShowDesktop aria-label="Show desktop" />
        </Tray>
      </Taskbar>

      <TopMark>专业打杂<small>940047551</small></TopMark>
      <SideWidget />
      <SiteMark>
        <svg width="70" height="62" viewBox="0 0 70 62" fill="none">
          <path d="M36 28Q20 2 6 6Q-2 16 14 32Q28 42 39 32Q41 24 30 14" stroke="#5f7585" strokeWidth="3" opacity=".75" />
          <path d="M40 26Q50 18 56 24Q60 34 46 50Q38 58 30 57" stroke="#bb3340" strokeWidth="4" opacity=".75" />
          <path d="M30 57Q24 42 40 26" stroke="#bb3340" strokeWidth="1.500" opacity=".6" />
        </svg>
        <strong>野火论坛</strong>
        <span>www.proewildfire.cn</span>
      </SiteMark>
    </Desktop>
  );
}
